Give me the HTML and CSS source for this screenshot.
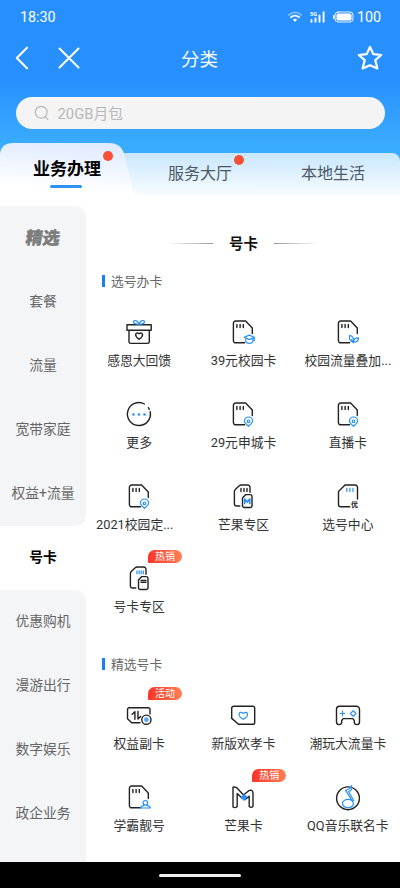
FILE: index.html
```html
<!DOCTYPE html>
<html lang="zh-CN">
<head>
<meta charset="utf-8">
<title>分类</title>
<link rel="stylesheet" href="styles.css">
</head>
<body>
<svg class="defs" aria-hidden="true">
  <defs>
    <symbol id="card" viewBox="0 0 30 30">
      <path d="M24.3 16.6V11L17.6 4H7.6a2.2 2.2 0 0 0-2.2 2.2v17.4a2.2 2.2 0 0 0 2.2 2.2h9"/>
      <path d="M8.9 7.4v3.1M12.1 7.4v3.1M15.3 7.4v3.1"/>
    </symbol>
    <symbol id="pin" viewBox="0 0 30 30">
      <path d="M20.5 27.3c-2.6-2-4.1-3.6-4.1-5.2a4.1 4.1 0 0 1 8.2 0c0 1.6-1.5 3.2-4.1 5.2z"/>
      <circle cx="20.5" cy="22.3" r="1.3"/>
    </symbol>
    <symbol id="duo" viewBox="0 0 30 30">
      <path d="M22 11.2V6.2A2.2 2.2 0 0 0 19.8 4H13.2a3 3 0 0 0-2 .8L7.3 8.5a3 3 0 0 0-.9 2.1V22.8A2.2 2.2 0 0 0 8.6 25h3.2"/>
      <path d="M17.8 13.6h4.4a1.8 1.8 0 0 1 1.8 1.8v9.3a1.8 1.8 0 0 1-1.8 1.8h-5.9a1.8 1.8 0 0 1-1.8-1.8v-7.6z"/>
    </symbol>
  </defs>
</svg>
<div class="screen">
  <header class="top">
    <div class="status">
      <span class="time">18:30</span>
      <svg class="wifi" viewBox="0 0 14 12"><path class="dim" d="M.8 4Q7-1.2 13.2 4"/><path d="M3 6.3Q7 3 11 6.3"/><path class="dot" d="M4.9 8.5Q7 6.9 9.1 8.5L7 11z"/></svg>
      <svg class="signal" viewBox="0 0 16 12"><text x="0" y="4.8">5G</text><path d="M1.5 9v1.7M5.5 7.5v3.2M9.5 4.5v6.2M13.6 1.2v9.5"/></svg>
      <svg class="battery" viewBox="0 0 21 12"><rect class="shell" x="2" y="1" width="18" height="10" rx="3"/><rect x="3.5" y="2.5" width="15" height="7" rx="1.5"/><rect x="0" y="4" width="1.5" height="4" rx=".7"/></svg>
      <span class="level">100</span>
    </div>
    <div class="nav">
      <svg class="back" viewBox="0 0 14 24"><path d="M12 1.8 1.8 12 12 22.2"/></svg>
      <svg class="close" viewBox="0 0 22 22"><path d="M1.5 1.5l19 19M20.5 1.5l-19 19"/></svg>
      <h1>分类</h1>
      <svg class="star" viewBox="0 0 26 26"><path d="M13 2l3.3 7.1 7.9.9-5.9 5.2 2.1 8.2-7.4-3.2-7.4 3.2 2.1-8.2L1.8 10l7.9-.9z"/></svg>
    </div>
    <div class="search">
      <svg viewBox="0 0 16 16"><circle cx="7.2" cy="7.2" r="5.9"/><path d="M11 11.3l2.8 3"/></svg>
      <span>20GB月包</span>
    </div>
    <div class="tabs">
      <div class="tab active">
        <svg class="shape" viewBox="0 0 136 52" preserveAspectRatio="none">
          <defs><linearGradient id="tabfill" x1=".7" y1="0" x2=".5" y2="1"><stop offset="0" stop-color="#dfeaff"/><stop offset=".9" stop-color="#fff"/></linearGradient></defs>
          <path fill="url(#tabfill)" d="M0 52V10Q2 0 12 0H109Q120 0 123.5 9L134.5 52z"/>
        </svg>
        <span class="name">业务办理<i class="dot"></i></span>
      </div>
      <div class="tab"><span class="name">服务大厅<i class="dot"></i></span></div>
      <div class="tab"><span class="name">本地生活</span></div>
    </div>
  </header>

  <div class="body">
    <nav class="side">
      <div class="cat featured"><span>精选</span></div>
      <div class="cat">套餐</div>
      <div class="cat">流量</div>
      <div class="cat">宽带家庭</div>
      <div class="cat before">权益+流量</div>
      <div class="cat current">号卡</div>
      <div class="cat after">优惠购机</div>
      <div class="cat">漫游出行</div>
      <div class="cat">数字娱乐</div>
      <div class="cat">政企业务</div>
      <div class="rest"></div>
    </nav>
    <main>
      <h2><span>号卡</span></h2>
      <h3>选号办卡</h3>
      <div class="grid">
        <div class="item"><svg viewBox="0 0 30 30"><path d="M3 7.8h24.2v5.4H3zM5 13.2v11.5a1.7 1.7 0 0 0 1.7 1.7h16.9a1.7 1.7 0 0 0 1.7-1.7V13.2"/><path d="M15.1 22.2c-5.4-3.4-3.5-7.5-.6-5.9l.6.5.6-.5c2.9-1.6 4.8 2.5-.6 5.9z"/><g class="b"><path d="M15 7.5C8.5 7 8.5 3.700 11 3.700c2 0 3.300 1.600 4 3.800.7-2.200 2-3.800 4-3.800 2.500 0 2.500 3.300-4 3.800z"/></g></svg><span>感恩大回馈</span></div>
        <div class="item"><svg viewBox="0 0 30 30"><use href="#card"/><g class="b"><path d="M16.300 20.300l5-2.200 5 2.200-5 2.300zM17.800 21.200v3.600c1 2.200 6 2.200 7 0v-3.600M26.300 20.300v3.500"/></g></svg><span>39元校园卡</span></div>
        <div class="item"><svg viewBox="0 0 30 30"><use href="#card"/><g class="b"><path d="M20.200 25.300c-3.500-.8-4.300-3.600-3.400-7.100 3 .9 4.600 3.600 3.400 7.100zM20.700 25c-.2-3.200 1.800-4.300 4.800-4.200.1 2.700-1.500 4.300-4.800 4.200zM18.600 22.500l1.800 3.200"/></g></svg><span>校园流量叠加...</span></div>
        <div class="item"><svg viewBox="0 0 30 30"><path d="M20.500 5A11.500 11.500 0 1 0 26.200 12.800M24.300 8.700q.6.800 1 1.700"/><g class="bf"><circle cx="9.500" cy="15.500" r="1.300"/><circle cx="15" cy="15.500" r="1.300"/><circle cx="20.500" cy="15.500" r="1.300"/></g></svg><span>更多</span></div>
        <div class="item"><svg viewBox="0 0 30 30"><use href="#card"/><use class="b" href="#pin"/></svg><span>29元申城卡</span></div>
        <div class="item"><svg viewBox="0 0 30 30"><use href="#card"/><use class="b" href="#pin"/></svg><span>直播卡</span></div>
        <div class="item"><svg viewBox="0 0 30 30"><use href="#card"/><use class="b" href="#pin"/></svg><span class="clipped">2021校园定...</span></div>
        <div class="item"><svg viewBox="0 0 30 30"><use href="#duo"/><path d="M13 7.500v3M16 7.500v3M19 7.500v3"/><path class="b thick" d="M16.700 22.500V18l2.500 3 2.500-3v4.500"/></svg><span>芒果专区</span></div>
        <div class="item"><svg viewBox="0 0 30 30"><path d="M24.500 18V6.200A2.200 2.200 0 0 0 22.300 4H12L5.500 10.600V23.600a2.200 2.200 0 0 0 2.200 2.200h9"/><path class="b" d="M13.800 7.400v3M16.900 7.400v3M20 7.400v3"/><text class="you" x="18" y="25.500">优</text></svg><span>选号中心</span></div>
        <div class="item"><em>热销</em><svg viewBox="0 0 30 30"><use href="#duo"/><path class="b" d="M13 7.800v3M15.100 7.800v3M17.200 7.800v3M19.300 7.800v3"/><path d="M17 17.400h5M17 19.200h5"/></svg><span>号卡专区</span></div>
      </div>
      <h3 class="second">精选号卡</h3>
      <div class="grid">
        <div class="item"><em>活动</em><svg viewBox="0 0 30 30"><path d="M26 14V9.500a1.700 1.700 0 0 0-1.700-1.700H5.200a1.700 1.700 0 0 0-1.700 1.700v9.300l4.200 4H16"/><path d="M8.200 14.300l2.700-2.500v7.500M14 11.500v7.500l2.600-2.500"/><circle cx="22.400" cy="19.700" r="4.600"/><circle class="bf" cx="22.400" cy="19.700" r="2.400" opacity=".8"/></svg><span>权益副卡</span></div>
        <div class="item"><svg viewBox="0 0 30 30"><path d="M5.600 6.300h19.200A1.900 1.900 0 0 1 26.700 8.200v14.200a1.900 1.900 0 0 1-1.900 1.900H10.500L3.700 18.400V8.200a1.900 1.900 0 0 1 1.900-1.900z"/><path class="b" d="M15.300 19.300c-6.800-4-4.200-8.600-.7-6.400l.7.600.7-.6c3.500-2.200 6.100 2.400-.7 6.400z"/></svg><span>新版欢孝卡</span></div>
        <div class="item"><svg viewBox="0 0 30 30"><path d="M6.500 6.300h17a3 3 0 0 1 3 3v12.500a2.600 2.600 0 0 1-5.200.4V20.500l-1.500-1.900h-9.600l-1.500 1.900v1.700a2.600 2.600 0 0 1-5.200-.4V9.300a3 3 0 0 1 3-3z"/><g class="b"><path d="M7.200 13.500h4.600M9.500 11.200v4.600M18.900 12l1.300-1.200 1.300 1.200M18.900 15l1.300 1.200 1.300-1.200M18.400 12.500l-.9 1 .9 1M22 12.500l.9 1-.9 1"/></g></svg><span>潮玩大流量卡</span></div>
        <div class="item"><svg viewBox="0 0 30 30"><use href="#card"/><g class="b"><circle cx="21.400" cy="20.800" r="2.300"/><path d="M20 22.700c.3 1.500-1.500 1.300-2.800 1.800l-.8 1.500h10l-.8-1.500c-1.300-.5-3.100-.3-2.800-1.800"/></g></svg><span>学霸靓号</span></div>
        <div class="item"><em>热销</em><svg viewBox="0 0 30 30"><path d="M5 25V5.200Q8 4.500 9.500 6.500L15.500 13l5.200-4.300q3.900-1.700 4.300 2.500v13.300q-2 1.500-3.800 0V14.200L17 17.600l-2.500-1.200-5.300-5V24.500Q7 26.500 5 25z"/><path class="bf" d="M12.700 15.200l3.300-3.200 3.300 2.600-1.800 3.400-1.600.8z"/></svg><span>芒果卡</span></div>
        <div class="item"><svg viewBox="0 0 30 30"><circle cx="15" cy="16.300" r="11.400"/><g class="b"><ellipse cx="15" cy="21.600" rx="5.500" ry="4.200"/><path d="M19.500 19.200L12.600 8.400c3-.7 5.200-2.200 5.900-4.700v3.500c-.6 1.400-1.700 2-3 2.300l5.200 9"/></g></svg><span>QQ音乐联名卡</span></div>
      </div>
    </main>
  </div>
  <footer><i></i></footer>
</div>
</body>
</html>
```
FILE: styles.css
```css
* { box-sizing: border-box; margin: 0; padding: 0; }
body {
  width: 400px;
  height: 888px;
  overflow: hidden;
  font-family: Roboto, "Noto Sans CJK SC", sans-serif;
  color: #333;
  background: #fff;
}
.defs { position: absolute; width: 0; height: 0; }
svg { display: block; fill: none; stroke-linecap: round; stroke-linejoin: round; }
.screen { height: 888px; display: flex; flex-direction: column; }

.top {
  height: 195px;
  display: flex;
  flex-direction: column;
  background: linear-gradient(#2890fe 0, #2890fe 80px, #3aacff 145px, #3aacff);
  color: #fff;
}
.status {
  height: 34px;
  display: flex;
  align-items: center;
  padding-left: 20px;
  font-size: 14.3px;
}
.time { width: 268px; }
.wifi { width: 14px; height: 12px; stroke: #fff; stroke-width: 1.8; }
.wifi .dim { opacity: .4; }
.wifi .dot { fill: #fff; stroke: none; }
.signal { width: 16px; height: 12px; margin-left: 8px; stroke: #fff; stroke-width: 1.9; overflow: visible; }
.signal text { fill: #fff; stroke: none; font-size: 5.5px; font-weight: 700; }
.battery { width: 21px; height: 12px; margin-left: 7px; fill: #fff; }
.battery .shell { fill: none; stroke: #fff; stroke-width: .9; }
.level { margin-left: 3px; }
.nav { height: 48px; display: flex; align-items: center; padding: 0 17px 0 15px; }
.nav svg { stroke: #fff; stroke-width: 2; }
.back { width: 14px; height: 24px; }
.close { width: 22px; height: 22px; margin-left: 29px; }
h1 { font-size: 18.5px; font-weight: 400; line-height: 28px; margin: 3px 0 0 101px; }
.nav .star { width: 26px; height: 26px; margin-left: auto; stroke-width: 2.2; }
.search {
  height: 32px;
  margin: 15px 15.5px 14px 16px;
  border-radius: 16px;
  background: #f4f4f4;
  color: #b8b8b8;
  display: flex;
  align-items: center;
  padding-left: 18px;
  font-size: 14.8px;
}
.search span { padding-bottom: 2px; }
.search svg { width: 16px; height: 16px; margin-right: 7.5px; stroke: #b8b8b8; stroke-width: 1.2; }
.tabs {
  height: 52px;
  display: grid;
  grid-template-columns: 134px 132px 134px;
  align-items: end;
  background: #3aacff;
}
.tab {
  height: 42px;
  display: flex;
  justify-content: center;
  align-items: center;
  font-size: 16px;
  color: #4b5865;
  background: linear-gradient(#c8e7ff, #f8fcff) 0 100% / 100% 42px no-repeat;
}
.tab:last-child { border-radius: 0 8px 0 0; }
.tab .name { position: relative; line-height: 24px; }
.tab .dot {
  position: absolute;
  right: -12px;
  top: -7px;
  width: 10px;
  height: 10px;
  border-radius: 50%;
  background: #f84f37;
}
.tab.active {
  height: 52px;
  position: relative;
  font-size: 17px;
  font-weight: 700;
  color: #000;
}
.shape { position: absolute; left: 0; top: 0; width: 136px; height: 52px; }
.active .name::after {
  content: "";
  position: absolute;
  left: 17px;
  top: 28px;
  width: 32px;
  height: 3px;
  border-radius: 2px;
  background: #2e90f8;
}
.active .name .dot { right: -12px; top: -6px; }

.body { height: 667px; display: grid; grid-template-columns: 86px 1fr; }
.side { padding-top: 11px; display: flex; flex-direction: column; }
.cat {
  height: 64px;
  flex: none;
  display: flex;
  align-items: center;
  justify-content: center;
  padding-bottom: 4px;
  font-size: 13.8px;
  color: #666;
  background: #f4f5f7;
}
.cat.featured {
  border-radius: 0 10px 0 0;
  padding-bottom: 3px;
  font-size: 17px;
  font-weight: 700;
  color: #7a7a7a;
  -webkit-text-stroke: .6px #7a7a7a;
}
.featured span { transform: skewX(-8deg); }
.before { border-radius: 0 0 10px 0; }
.after { border-radius: 0 10px 0 0; }
.cat.current { background: #fff; color: #000; font-weight: 700; }
.rest { flex: 1; background: #f4f5f7; }

main { padding-left: 1px; }
h2 {
  height: 28px;
  margin: 34px 0 11px;
  display: flex;
  align-items: center;
  justify-content: center;
  gap: 16px;
  font-size: 14.5px;
  color: #111;
}
h2 span { padding-bottom: 2px; }
h2::before, h2::after { content: ""; width: 45px; height: 1px; background: linear-gradient(90deg, transparent, #999); }
h2::after { background: linear-gradient(90deg, #999, transparent); }
h3 {
  height: 24px;
  display: flex;
  align-items: center;
  padding-left: 15px;
  font-size: 12.8px;
  font-weight: 400;
  color: #666;
}
h3::before { content: ""; width: 3px; height: 12px; margin: 2px 6px 0 0; background: #1680fb; }
h3.second { margin-top: 6px; }
.grid { display: grid; grid-template-columns: repeat(3, 1fr); grid-auto-rows: 82px; padding-top: 25px; }
.item { position: relative; display: flex; flex-direction: column; align-items: center; white-space: nowrap; }
.item svg { width: 30px; height: 30px; stroke: #222; stroke-width: 1.4; }
.item span { margin-top: 4px; font-size: 12.8px; line-height: 20px; }
.item .clipped { margin-right: 9px; }
.item .b { stroke: #2890f8; stroke-width: 1.2; }
.item .thick { stroke-width: 1.7; }
.item .bf { fill: #2890f8; stroke: none; }
.item .you { fill: #222; stroke: none; font-size: 7px; font-weight: 700; }
.item em {
  position: absolute;
  left: 61px;
  top: -13px;
  width: 34px;
  height: 13px;
  border-radius: 6.5px 6.5px 6.5px 1px;
  background: linear-gradient(90deg, #fb3428, #ff8055);
  color: #fff;
  font-size: 10px;
  font-style: normal;
  line-height: 13px;
  text-align: center;
}
footer { height: 26px; background: #000; display: flex; justify-content: center; align-items: center; }
footer i { width: 82px; height: 3px; border-radius: 2px; background: #eee; }
```
